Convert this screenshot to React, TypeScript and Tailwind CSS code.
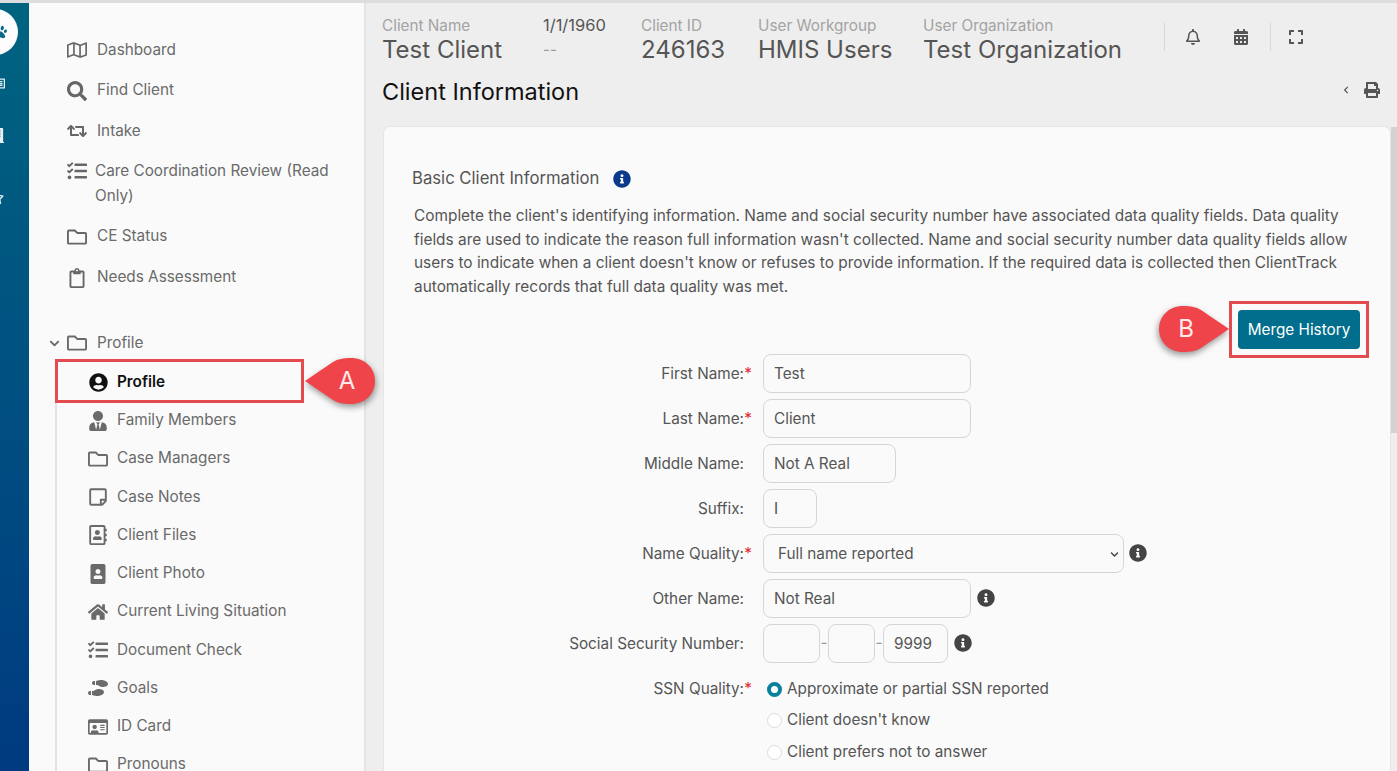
import type { ComponentType, ReactNode } from "react";
import {
  FaRegMap,
  FaSearch,
  FaRetweet,
  FaTasks,
  FaRegFolder,
  FaRegClipboard,
  FaUserCircle,
  FaUserTie,
  FaRegStickyNote,
  FaRegAddressBook,
  FaPortrait,
  FaHome,
  FaShoePrints,
  FaRegIdCard,
  FaRegBell,
  FaCalendarAlt,
  FaExpand,
  FaPrint,
  FaChevronLeft,
  FaChevronDown,
  FaInfoCircle,
  FaRegNewspaper,
  FaRegStar,
  FaBuilding,
  FaPaw,
} from "react-icons/fa";

type Icon = ComponentType<{ className?: string }>;

const topNav: { label: ReactNode; icon: Icon; h: string }[] = [
  { label: "Dashboard", icon: FaRegMap, h: "h-[40px]" },
  { label: "Find Client", icon: FaSearch, h: "h-[41px]" },
  { label: "Intake", icon: FaRetweet, h: "h-[40px]" },
  { label: "CE Status", icon: FaRegFolder, h: "h-[41px]" },
  { label: "Needs Assessment", icon: FaRegClipboard, h: "h-[41px]" },
];

const subNav: { label: string; icon: Icon }[] = [
  { label: "Family Members", icon: FaUserTie },
  { label: "Case Managers", icon: FaRegFolder },
  { label: "Case Notes", icon: FaRegStickyNote },
  { label: "Client Files", icon: FaRegAddressBook },
  { label: "Client Photo", icon: FaPortrait },
  { label: "Current Living Situation", icon: FaHome },
  { label: "Document Check", icon: FaTasks },
  { label: "Goals", icon: FaShoePrints },
  { label: "ID Card", icon: FaRegIdCard },
  { label: "Pronouns", icon: FaRegFolder },
];

function TopItem({ label, icon: I, h }: { label: ReactNode; icon: Icon; h: string }) {
  return (
    <div className={`flex items-center ${h}`}>
      <span className="flex w-[24px] justify-center text-[#666]">
        <I className="text-[20px]" />
      </span>
      <span className="ml-[8px]">{label}</span>
    </div>
  );
}

function Sidebar() {
  const [dash, find, intake, ce, needs] = topNav;
  return (
    <aside className="w-[337px] shrink-0 border-r-2 border-[#e3e3e3] bg-[#fafafa] pt-[27px] pl-[36px] text-[15.3px] text-[#6a6a6a]">
      <TopItem {...dash} />
      <TopItem {...find} />
      <TopItem {...intake} />
      <div className="flex h-[65px] items-start pt-[7px] leading-[25px]">
        <span className="flex h-[25px] w-[24px] items-center justify-center text-[#666]">
          <FaTasks className="text-[20px]" />
        </span>
        <span className="ml-[6px] w-[250px]">Care Coordination Review (Read Only)</span>
      </div>
      <TopItem {...ce} />
      <TopItem {...needs} />

      <div className="mt-[25px] flex h-[40px] items-center">
        <FaChevronDown className="-ml-[16px] mr-[5px] text-[11px] text-[#666]" />
        <span className="flex w-[24px] justify-center">
          <FaRegFolder className="text-[20px]" />
        </span>
        <span className="ml-[8px]">Profile</span>
      </div>

      <div className="-ml-[10px] border-l-2 border-[#e3e3e3]">
        <div className="relative flex h-[38.5px] items-center pl-[31px] font-semibold text-[#111]">
          <span className="flex w-[20px] justify-center">
            <FaUserCircle className="text-[19px]" />
          </span>
          <span className="ml-[9px]">Profile</span>
          <div className="absolute -left-[2px] -top-[4px] h-[44px] w-[249px] border-[3px] border-[#e34b4f]" />
        </div>
        {subNav.map(({ label, icon: I }) => (
          <div key={label} className="flex h-[38.25px] items-center pl-[31px]">
            <span className="flex w-[20px] justify-center">
              <I className="text-[20px]" />
            </span>
            <span className="ml-[9px]">{label}</span>
          </div>
        ))}
      </div>
    </aside>
  );
}

function Rail() {
  return (
    <div className="flex w-[29px] shrink-0 flex-col overflow-hidden bg-gradient-to-b from-[#006480] to-[#003a80] text-[#e8f0f4]">
      <div className="-ml-[28px] mt-[6px] flex h-[46px] w-[46px] shrink-0 items-center justify-end rounded-full bg-[#fdfdfd] pr-[11px] text-[#0b6a8a]">
        <FaPaw className="shrink-0 text-[14px]" />
      </div>
      <FaRegNewspaper className="-ml-[10px] mt-[21px] shrink-0 text-[15px]" />
      <FaBuilding className="-ml-[10px] mt-[37px] shrink-0 text-[15px]" />
      <FaRegStar className="-ml-[11px] mt-[47px] shrink-0 text-[15px]" />
    </div>
  );
}

function HeadCol({ label, value, w, dark }: { label: string; value: string; w: string; dark?: boolean }) {
  return (
    <div className={w}>
      <div className={`leading-[19px] ${dark ? "text-[16.5px] text-[#555]" : "text-[15.3px] text-[#a3a3a3]"}`}>{label}</div>
      <div className={`leading-[30px] ${dark ? "text-[15px] text-[#999]" : "text-[24px] text-[#555]"}`}>{value}</div>
    </div>
  );
}

function Info({ className }: { className?: string }) {
  return <FaInfoCircle className={`-mt-[2px] text-[18px] text-[#444] ${className ?? ""}`} />;
}

function Row({ label, required, children }: { label: string; required?: boolean; children: ReactNode }) {
  return (
    <div className="flex h-[45px] items-center">
      <div className="relative w-[360px] pt-[1px] text-right">
        {label}
        {required && <span className="absolute -right-[8px] text-[#e3262e]">*</span>}
      </div>
      <div className="ml-[19px] flex items-center">{children}</div>
    </div>
  );
}

function Field({ value, w }: { value?: string; w: string }) {
  return (
    <div className={`flex h-[39px] items-center rounded-[8px] border border-[#d6d6d6] px-[10px] pt-[1px] ${w}`}>{value}</div>
  );
}

function Radio({ label, on }: { label: string; on?: boolean }) {
  return (
    <div className="flex h-[31.5px] items-center">
      {on ? (
        <span className="h-[15px] w-[15px] rounded-full border-[4px] border-[#0a7f9e] bg-white" />
      ) : (
        <span className="h-[15px] w-[15px] rounded-full border border-[#dcdcdc] bg-white" />
      )}
      <span className="ml-[5px]">{label}</span>
    </div>
  );
}

function Callout({ letter, className, flip }: { letter: string; className: string; flip?: boolean }) {
  return (
    <div className={`absolute flex h-[46px] w-[70px] items-center justify-center ${className}`}>
      <svg
        viewBox="0 0 70 46"
        className={`absolute inset-0 h-full w-full drop-shadow-[1px_3px_3px_rgba(0,0,0,0.4)] ${flip ? "-scale-x-100" : ""}`}
      >
        <path d="M0 23 L28 4 C33 1 38 0 46 0 C60 0 70 10 70 23 C70 36 60 46 46 46 C38 46 33 45 28 42 Z" fill="#ef4449" />
      </svg>
      <span className={`relative text-[24px] text-[#ffe9e9] ${flip ? "-ml-[16px]" : "ml-[14px]"}`}>{letter}</span>
    </div>
  );
}

export default function App() {
  return (
    <div
      className="relative h-[771px] w-[1397px] overflow-hidden bg-[#eeeeee]"
      style={{ fontFamily: "Inter, 'Noto Sans', sans-serif" }}
    >
      <div className="flex h-[771px] border-t-[3px] border-[#dddddd]">
        <Rail />
        <Sidebar />
        <main className="flex min-w-0 flex-1 flex-col pl-[16px]">
          <header className="flex h-[60px] items-start pt-[13px]">
            <HeadCol label="Client Name" value="Test Client" w="w-[161px]" />
            <HeadCol label="1/1/1960" value="--" w="w-[98px]" dark />
            <HeadCol label="Client ID" value="246163" w="w-[117px]" />
            <HeadCol label="User Workgroup" value="HMIS Users" w="w-[165px]" />
            <HeadCol label="User Organization" value="Test Organization" w="w-[241px]" />
            <div className="mt-[7px] flex h-[28px] items-center border-l border-[#d8d8d8] text-[#555]">
              <FaRegBell className="ml-[20px] text-[16px]" />
              <FaCalendarAlt className="ml-[32px] text-[16px]" />
              <div className="ml-[21px] h-[28px] border-l border-[#d8d8d8]" />
              <FaExpand className="ml-[17px] text-[16px]" />
            </div>
          </header>
          <div className="flex h-[64px] items-start pt-[14px]">
            <h1 className="text-[23.5px] leading-[30px] text-[#111]">Client Information</h1>
            <div className="ml-auto mr-[17px] mt-[5px] flex items-center text-[#555]">
              <FaChevronLeft className="text-[8px]" />
              <FaPrint className="ml-[14px] text-[16px]" />
            </div>
          </div>
          <div className="flex flex-1">
            <section className="ml-[2px] w-[1006px] rounded-t-[6px] bg-[#fafafa] pl-[28px] pt-[39px] text-[15.3px] text-[#555] shadow-[0_0_2px_rgba(0,0,0,0.12)]">
              <div className="flex h-[26px] items-center text-[16.7px]">
                Basic Client Information
                <FaInfoCircle className="ml-[14px] text-[18px] text-[#0a3a8c]" />
              </div>
              <p className="ml-[2px] mt-[12px] whitespace-nowrap text-[15.4px] leading-[23.6px]">
                Complete the client's identifying information. Name and social security number have associated data quality fields. Data quality
                <br />
                fields are used to indicate the reason full information wasn't collected. Name and social security number data quality fields allow
                <br />
                users to indicate when a client doesn't know or refuses to provide information. If the required data is collected then ClientTrack
                <br />
                automatically records that full data quality was met.
              </p>
              <div className="mr-[21px] mt-[3px] flex justify-end">
                <div className="border-[3px] border-[#e34b4f] p-[6px]">
                  <div className="flex h-[39px] w-[122px] items-center justify-center rounded-[4px] bg-[#006e8c] pt-[1px] text-white">
                    Merge History
                  </div>
                </div>
              </div>
              <div className="-ml-[28px] -mt-[7px]">
                <Row label="First Name:" required><Field value="Test" w="w-[208px]" /></Row>
                <Row label="Last Name:" required><Field value="Client" w="w-[208px]" /></Row>
                <Row label="Middle Name:"><Field value="Not A Real" w="w-[133px]" /></Row>
                <Row label="Suffix:"><Field value="I" w="w-[54px]" /></Row>
                <Row label="Name Quality:" required>
                  <div className="flex h-[39px] w-[361px] items-center justify-between rounded-[8px] border border-[#d6d6d6] pl-[14px] pr-[4px] pt-[1px]">
                    Full name reported
                    <FaChevronDown className="text-[9px] text-[#444]" />
                  </div>
                  <Info className="ml-[5px]" />
                </Row>
                <Row label="Other Name:"><Field value="Not Real" w="w-[208px]" /><Info className="ml-[6px]" /></Row>
                <Row label="Social Security Number:">
                  <Field w="w-[57px]" />
                  <span className="w-[8px] text-center text-[#999]">-</span>
                  <Field w="w-[47px]" />
                  <span className="w-[8px] text-center text-[#999]">-</span>
                  <Field value="9999" w="w-[65px]" />
                  <Info className="ml-[6px]" />
                </Row>
                <div className="flex pt-[7px]">
                  <div className="relative h-[31.5px] w-[360px] text-right leading-[31.5px]">
                    SSN Quality:
                    <span className="absolute -right-[8px] text-[#e3262e]">*</span>
                  </div>
                  <div className="ml-[23px]">
                    <Radio label="Approximate or partial SSN reported" on />
                    <Radio label="Client doesn't know" />
                    <Radio label="Client prefers not to answer" />
                  </div>
                </div>
              </div>
            </section>
            <div className="ml-[1px] flex flex-1 flex-col">
              <div className="h-[306px] bg-[#d2d2d2]" />
            </div>
          </div>
        </main>
      </div>
      <Callout letter="A" className="left-[305px] top-[358px]" />
      <Callout letter="B" className="left-[1159px] top-[306px]" flip />
    </div>
  );
}
